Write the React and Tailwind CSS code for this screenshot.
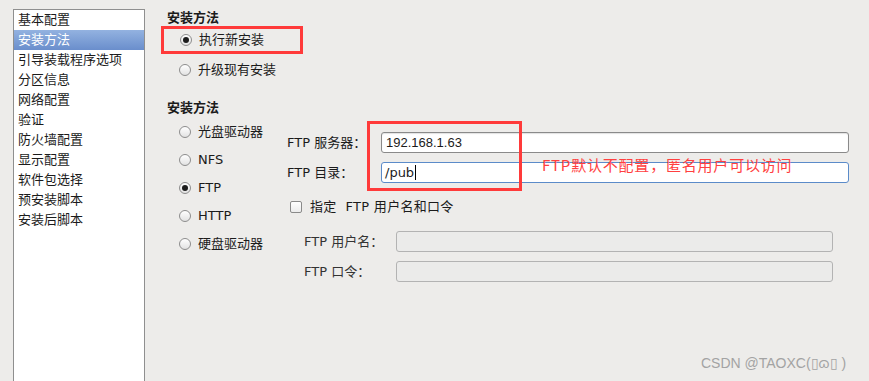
import React from 'react';

const font = "font-['DejaVu_Sans','Noto_Sans_CJK_SC',sans-serif]";

const navItems = ['基本配置', '安装方法', '引导装载程序选项', '分区信息', '网络配置', '验证', '防火墙配置', '显示配置', '软件包选择', '预安装脚本', '安装后脚本'];

const Radio = ({ checked }) => (
    <span className="flex h-[12px] w-[12px] shrink-0 items-center justify-center rounded-full border border-[#8d8d8d] bg-gradient-to-b from-[#ffffff] to-[#e2e2e2]">
        {checked && <span className="h-[6px] w-[6px] rounded-full bg-[#1c1c1c]" />}
    </span>
);

const Field = ({ label, labelClass, children }) => (
    <div className="flex items-center">
        <span className={labelClass}>{label}</span>
        {children}
    </div>
);

const App = () => {
    const methods = [
        { label: '光盘驱动器' },
        { label: 'NFS' },
        { label: 'FTP', checked: true },
        { label: 'HTTP' },
        { label: '硬盘驱动器' },
    ];

    return (
        <div className={`relative flex h-[381px] w-[869px] overflow-hidden bg-[#edecea] text-[13px] text-[#1b1b1b] ${font}`}>
            {/* left nav */}
            <div className="ml-[13px] mt-[9px] h-[372px] w-[132px] shrink-0 border border-b-0 border-[#8f8f8f] bg-white">
                {navItems.map((item, i) => (
                    <div key={item} className={`h-[20px] pl-[4px] leading-[20px] ${i === 1 ? 'bg-gradient-to-b from-[#93b2e0] to-[#6a8ecc] text-white' : ''}`}>
                        {item}
                    </div>
                ))}
            </div>

            {/* main */}
            <div className="flex-1 pl-[16px]">
                <div className="mt-[10px] h-[16px] pl-[6px] font-bold leading-[16px]">安装方法</div>

                <div className="flex h-[28px] w-[142px] items-center gap-[7px] border-[3px] border-[#ff3a3a] pl-[16px]">
                    <Radio checked />
                    <span>执行新安装</span>
                </div>
                <div className="mt-[6px] flex h-[20px] items-center gap-[7px] pl-[18px]">
                    <Radio />
                    <span>升级现有安装</span>
                </div>

                <div className="mt-[20px] h-[16px] pl-[6px] font-bold leading-[16px]">安装方法</div>

                <div className="mt-[2px] flex">
                    <div className="w-[126px] shrink-0 pl-[18px]">
                        {methods.map((m) => (
                            <div key={m.label} className="flex h-[28px] items-center gap-[7px]">
                                <Radio checked={m.checked} />
                                <span>{m.label}</span>
                            </div>
                        ))}
                    </div>

                    <div className="flex flex-col">
                        <div className="mt-[14px]">
                            <Field label="FTP 服务器：" labelClass="w-[94px]">
                                <div className="flex h-[21px] w-[468px] items-center rounded-[3px] border border-[#8a8a8a] bg-white pl-[4px] font-['Liberation_Sans',sans-serif] shadow-[inset_0_1px_1px_rgba(0,0,0,0.12)]">
                                    192.168.1.63
                                </div>
                            </Field>
                        </div>
                        <div className="mt-[9px]">
                            <Field label="FTP 目录：" labelClass="w-[94px]">
                                <div className="flex h-[21px] w-[468px] items-center rounded-[3px] border border-[#5b8bc9] bg-white pl-[3px]">
                                    /pub<span className="ml-[1px] h-[15px] w-[1px] bg-black" />
                                </div>
                            </Field>
                        </div>
                        <div className="mt-[16px] flex h-[16px] items-center gap-[8px] pl-[3px]">
                            <span className="h-[12px] w-[12px] rounded-[2px] border border-[#8a8a8a] bg-gradient-to-b from-white to-[#ececec]" />
                            <span className="tracking-[0.3px]">指定&nbsp; FTP 用户名和口令</span>
                        </div>
                        <div className="mt-[16px] pl-[17px]">
                            <Field label="FTP 用户名：" labelClass="w-[92px] text-[#333]">
                                <div className="h-[21px] w-[437px] rounded-[3px] border border-[#b3b3b3] bg-[#ebebea]" />
                            </Field>
                        </div>
                        <div className="mt-[9px] pl-[17px]">
                            <Field label="FTP 口令：" labelClass="w-[92px] text-[#333]">
                                <div className="h-[21px] w-[437px] rounded-[3px] border border-[#b3b3b3] bg-[#ebebea]" />
                            </Field>
                        </div>
                    </div>
                </div>
            </div>

            {/* annotations */}
            <div className="absolute left-[367px] top-[121px] h-[70px] w-[155px] border-[3px] border-[#ff3a3a]" />
            <div className="absolute left-[542px] top-[155px] text-[15px] leading-[20px] tracking-[0.8px] text-[#ff4040] font-['Noto_Sans_CJK_SC',sans-serif]">
                FTP默认不配置，匿名用户可以访问
            </div>
            <div className="absolute left-[701px] top-[354px] text-[14px] leading-[18px] text-[#a3a3a3] font-['Liberation_Sans','Noto_Sans_CJK_SC',sans-serif]">
                CSDN @TAOXC(▯ɷ▯ )
            </div>
        </div>
    );
};

export default App;
